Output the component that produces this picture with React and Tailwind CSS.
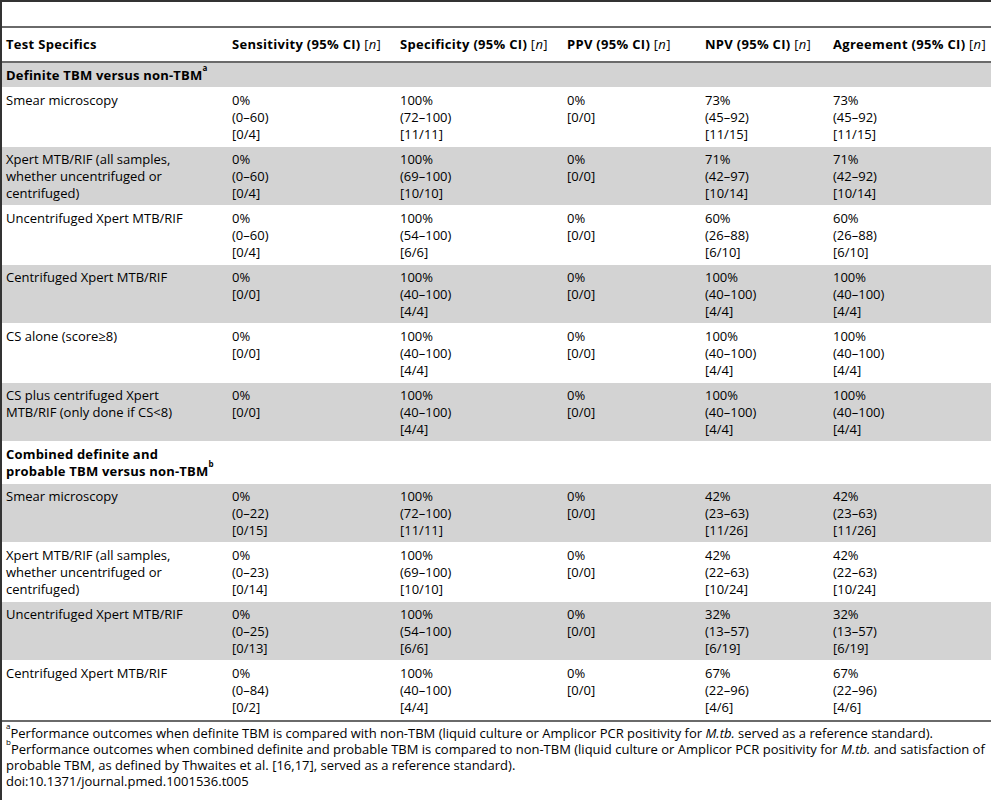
import React from "react";

const N = () => (
  <span className="font-normal">
    [<i>n</i>]
  </span>
);

const groups = [
  {
    title: (
      <>
        Definite TBM versus non-TBM<sup className="text-[8px] align-[5px]">a</sup>
      </>
    ),
    rows: [
      { label: "Smear microscopy", c: [["0%", "(0–60)", "[0/4]"], ["100%", "(72–100)", "[11/11]"], ["0%", "[0/0]"], ["73%", "(45–92)", "[11/15]"], ["73%", "(45–92)", "[11/15]"]] },
      { label: ["Xpert MTB/RIF (all samples,", "whether uncentrifuged or", "centrifuged)"], c: [["0%", "(0–60)", "[0/4]"], ["100%", "(69–100)", "[10/10]"], ["0%", "[0/0]"], ["71%", "(42–97)", "[10/14]"], ["71%", "(42–92)", "[10/14]"]] },
      { label: "Uncentrifuged Xpert MTB/RIF", c: [["0%", "(0–60)", "[0/4]"], ["100%", "(54–100)", "[6/6]"], ["0%", "[0/0]"], ["60%", "(26–88)", "[6/10]"], ["60%", "(26–88)", "[6/10]"]] },
      { label: "Centrifuged Xpert MTB/RIF", c: [["0%", "[0/0]"], ["100%", "(40–100)", "[4/4]"], ["0%", "[0/0]"], ["100%", "(40–100)", "[4/4]"], ["100%", "(40–100)", "[4/4]"]] },
      { label: "CS alone (score≥8)", c: [["0%", "[0/0]"], ["100%", "(40–100)", "[4/4]"], ["0%", "[0/0]"], ["100%", "(40–100)", "[4/4]"], ["100%", "(40–100)", "[4/4]"]] },
      { label: ["CS plus centrifuged Xpert", "MTB/RIF (only done if CS<8)"], c: [["0%", "[0/0]"], ["100%", "(40–100)", "[4/4]"], ["0%", "[0/0]"], ["100%", "(40–100)", "[4/4]"], ["100%", "(40–100)", "[4/4]"]] },
    ],
  },
  {
    title: (
      <>
        Combined definite and
        <br />
        probable TBM versus non-TBM<sup className="text-[8px] align-[5px]">b</sup>
      </>
    ),
    rows: [
      { label: "Smear microscopy", c: [["0%", "(0–22)", "[0/15]"], ["100%", "(72–100)", "[11/11]"], ["0%", "[0/0]"], ["42%", "(23–63)", "[11/26]"], ["42%", "(23–63)", "[11/26]"]] },
      { label: ["Xpert MTB/RIF (all samples,", "whether uncentrifuged or", "centrifuged)"], c: [["0%", "(0–23)", "[0/14]"], ["100%", "(69–100)", "[10/10]"], ["0%", "[0/0]"], ["42%", "(22–63)", "[10/24]"], ["42%", "(22–63)", "[10/24]"]] },
      { label: "Uncentrifuged Xpert MTB/RIF", c: [["0%", "(0–25)", "[0/13]"], ["100%", "(54–100)", "[6/6]"], ["0%", "[0/0]"], ["32%", "(13–57)", "[6/19]"], ["32%", "(13–57)", "[6/19]"]] },
      { label: "Centrifuged Xpert MTB/RIF", c: [["0%", "(0–84)", "[0/2]"], ["100%", "(40–100)", "[4/4]"], ["0%", "[0/0]"], ["67%", "(22–96)", "[4/6]"], ["67%", "(22–96)", "[4/6]"]] },
    ],
  },
];

function Lines({ v }) {
  const arr = Array.isArray(v) ? v : [v];
  return arr.map((t, i) => (
    <React.Fragment key={i}>
      {t}
      {i < arr.length - 1 && <br />}
    </React.Fragment>
  ));
}

export default function App() {
  let stripe = 0;
  const body = [];
  groups.forEach((g, gi) => {
    const gBg = stripe % 2 === 0 ? "bg-[#d3d3d3]" : "bg-white";
    stripe++;
    body.push(
      <tr key={"g" + gi} className={gBg + " border-b border-white"}>
        <td colSpan={6} className="pl-[4px] pt-[4px] pb-[3px] font-bold tracking-[0.2px] whitespace-nowrap">
          {g.title}
        </td>
      </tr>
    );
    g.rows.forEach((r, ri) => {
      const bg = stripe % 2 === 0 ? "bg-[#d3d3d3]" : "bg-white";
      stripe++;
      body.push(
        <tr key={gi + "-" + ri} className={bg + " border-b border-white align-top"}>
          <td className="pl-[4px] pt-[4px] pb-[3px] whitespace-nowrap">
            <Lines v={r.label} />
          </td>
          {r.c.map((cell, ci) => (
            <td key={ci} className="pl-[4px] pt-[4px] pb-[3px] whitespace-nowrap">
              <Lines v={cell} />
            </td>
          ))}
        </tr>
      );
    });
  });

  const th = "pl-[4px] pt-[8px] pb-[8px] font-bold tracking-[0.3px] whitespace-nowrap";

  return (
    <div
      className="w-[991px] h-[800px] bg-white text-black border-l-2 border-[#333] overflow-hidden text-[13px] leading-[17px]"
      style={{ fontFamily: '"Open Sans", "Liberation Sans", sans-serif' }}
    >
      <div className="h-[2px] bg-[#333]" />
      <div className="h-[24px]" />
      <table className="w-[989px] table-fixed border-collapse">
        <colgroup>
          <col className="w-[226px]" />
          <col className="w-[168px]" />
          <col className="w-[167px]" />
          <col className="w-[138px]" />
          <col className="w-[128px]" />
          <col className="w-[162px]" />
        </colgroup>
        <thead>
          <tr className="border-t-2 border-b-2 border-[#6a6a6a] text-left">
            <th className={th}>Test Specifics</th>
            <th className={th}>Sensitivity (95% CI) <N /></th>
            <th className={th}>Specificity (95% CI) <N /></th>
            <th className={th}>PPV (95% CI) <N /></th>
            <th className={th}>NPV (95% CI) <N /></th>
            <th className={th}>Agreement (95% CI) <N /></th>
          </tr>
        </thead>
        <tbody>{body}</tbody>
      </table>
      <div className="h-[2px] bg-[#6a6a6a]" />
      <div className="pl-[4px] pt-[3px] leading-[16px] whitespace-nowrap">
        <p>
          <sup className="text-[8px] align-[5px]">a</sup>Performance outcomes when definite TBM is compared with non-TBM (liquid culture or Amplicor PCR positivity for <i>M.tb.</i> served as a reference standard).
        </p>
        <p>
          <sup className="text-[8px] align-[5px]">b</sup>Performance outcomes when combined definite and probable TBM is compared to non-TBM (liquid culture or Amplicor PCR positivity for <i>M.tb.</i> and satisfaction of
          <br />
          probable TBM, as defined by Thwaites et al. [16,17], served as a reference standard).
        </p>
        <p>doi:10.1371/journal.pmed.1001536.t005</p>
      </div>
    </div>
  );
}
